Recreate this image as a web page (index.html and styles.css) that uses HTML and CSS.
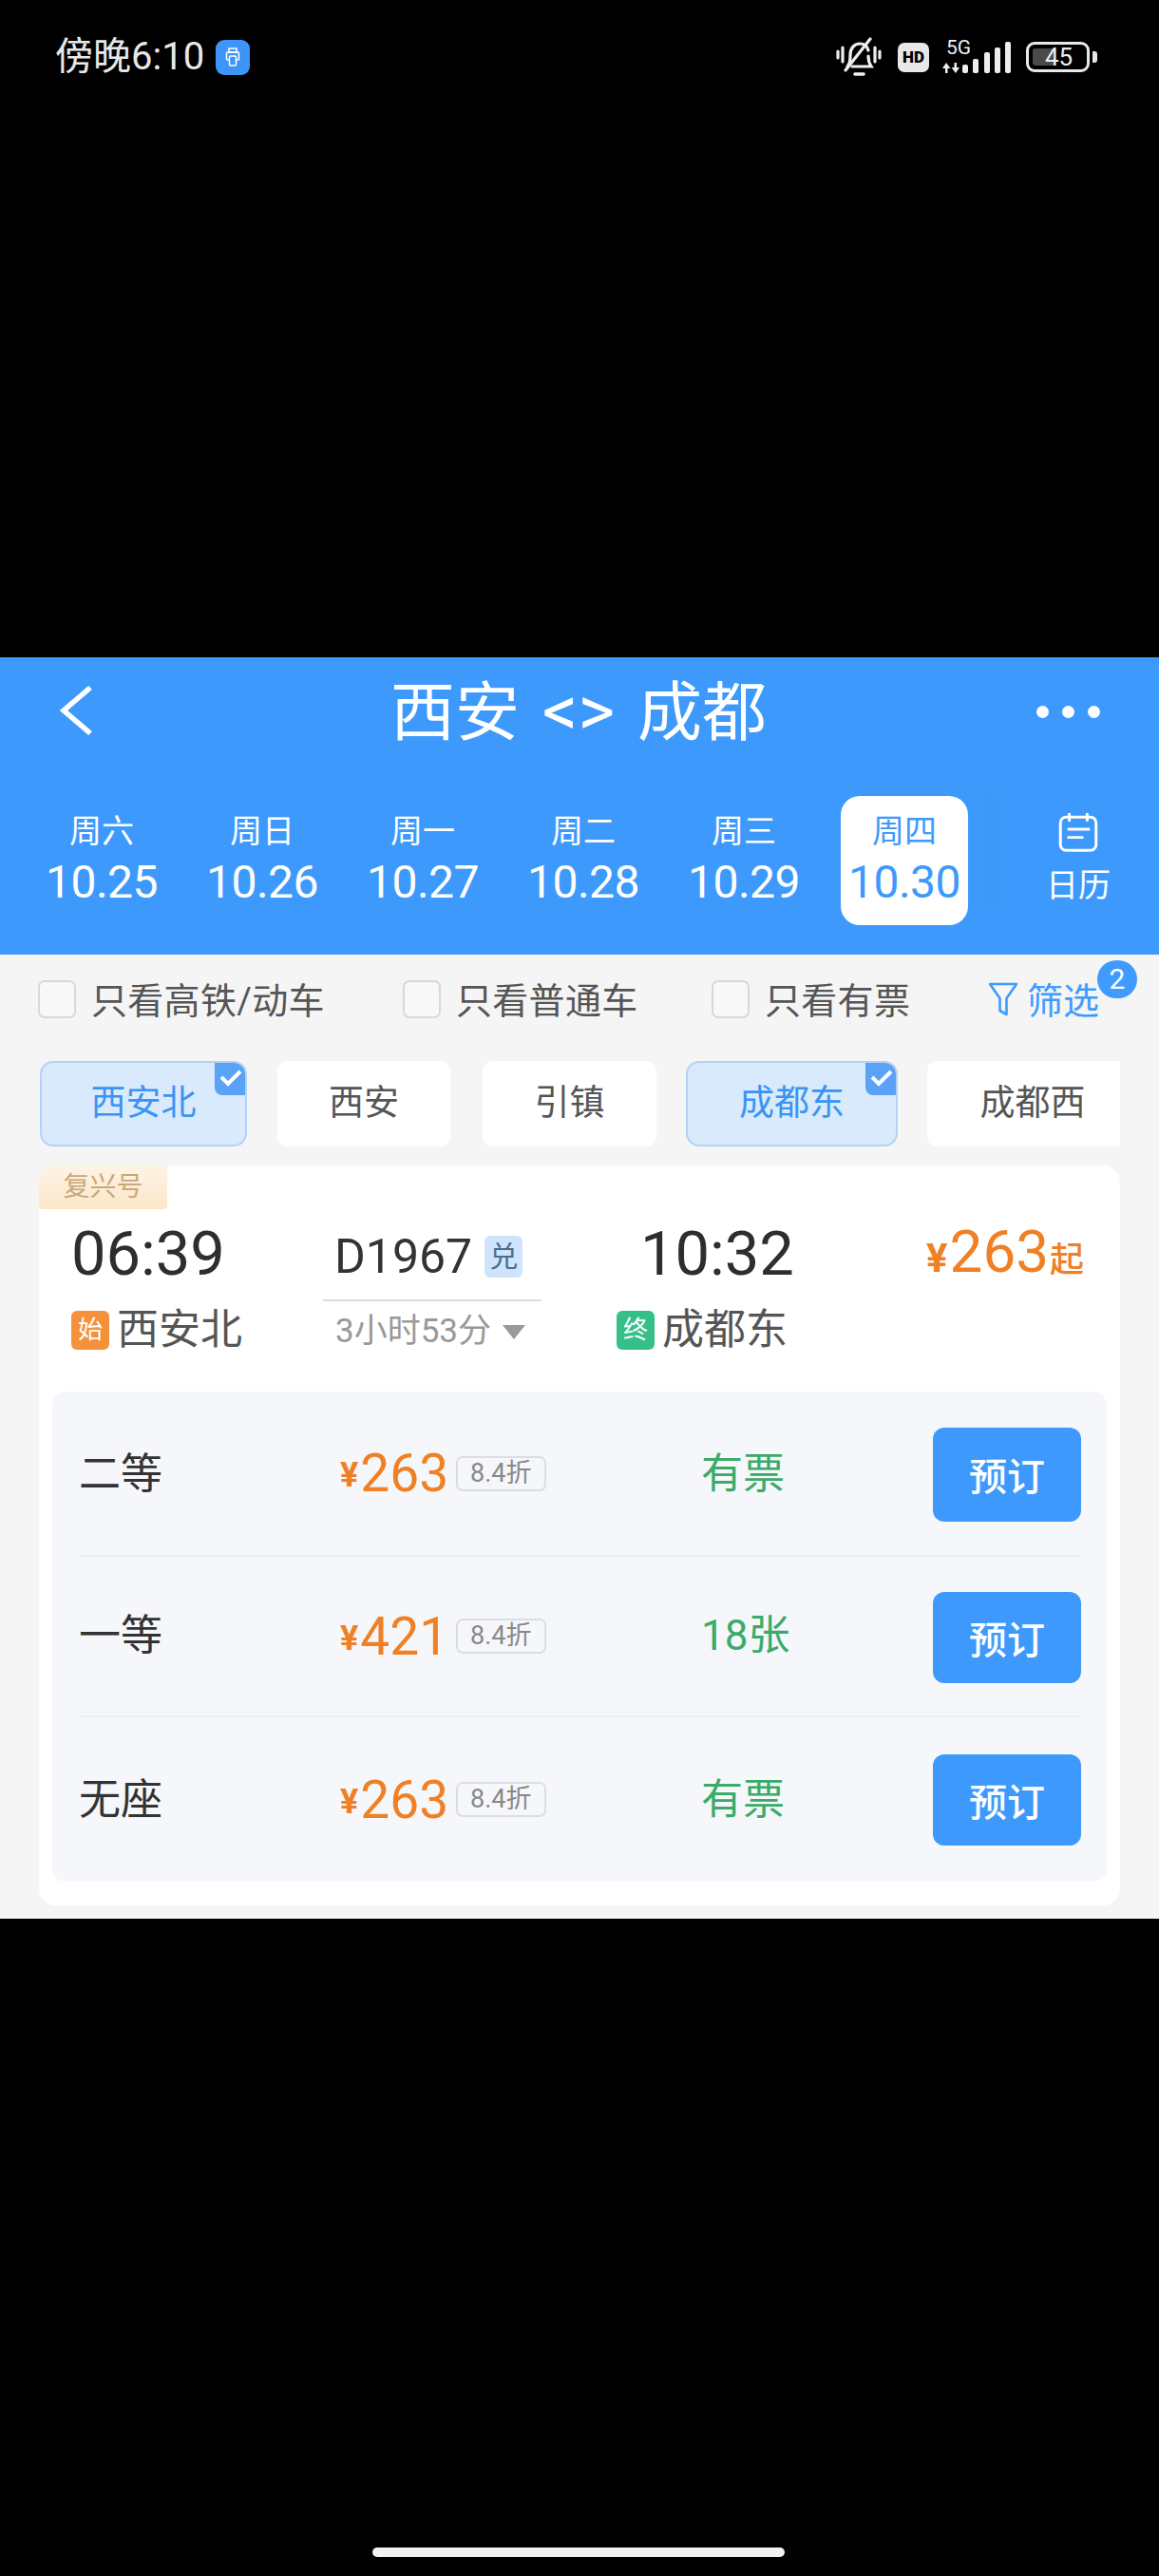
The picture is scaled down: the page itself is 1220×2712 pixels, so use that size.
FILE: index.html
```html
<!doctype html>
<html lang="zh-CN">
    <head>
        <meta charset="UTF-8" />
        <meta name="viewport" content="width=device-width, initial-scale=1.0" />
        <title>西安 - 成都</title>
        <link rel="stylesheet" href="styles.css">
    </head>
    <body>
        <div class="phone-top">
            <div class="statusbar">
                <div class="status-left">
                    <span class="clock">傍晚6:10</span>
                    <span class="app-dot">
                        <svg width="18" height="20" viewBox="0 0 18 20" fill="none" stroke="#fff" stroke-width="1.5">
                            <rect x="5" y="1" width="8" height="4" />
                            <rect x="2.500" y="5" width="13" height="8" rx="1" />
                            <rect x="5.500" y="9" width="7" height="10" rx="1" fill="#3d95f7" />
                        </svg>
                    </span>
                </div>
                <div class="status-right">
                    <svg class="ic-mute" width="48" height="42" viewBox="0 0 48 42" fill="none" stroke="#eee" stroke-width="3.200" stroke-linecap="round">
                        <path d="M2 15v7M7 11v15M46 15v7M41 11v15" />
                        <path d="M12 31c3-3 3-7 3-12 0-7 4-12 10-12 5 0 8 3 9 7M34 20c0 5 1 8 3 11H17" />
                        <path d="M36 2 10 35" />
                        <path d="M20 39h9" stroke-width="3.600" />
                    </svg>
                    <span class="hd">HD</span>
                    <div class="net">
                        <span class="net-5g">5G</span>
                        <svg width="74" height="36" viewBox="0 0 74 36" fill="#eee">
                            <path d="M4 24 0 30h3v5h2.500v-5h3zM14 35l4-6h-3v-5h-2.500v5h-3z" />
                            <rect x="21" y="26" width="6" height="9" rx="2" />
                            <rect x="32" y="20" width="6" height="15" rx="2" />
                            <rect x="44" y="13" width="6" height="22" rx="2" />
                            <rect x="55" y="8" width="6" height="27" rx="2" />
                            <rect x="66" y="2" width="6" height="33" rx="2" />
                        </svg>
                    </div>
                    <div class="battery">
                        <div class="battery-level"></div>
                        <span class="battery-num">45</span>
                    </div>
                    <div class="battery-tip"></div>
                </div>
            </div>
        </div>

        <div class="header">
            <div class="title-row">
                <svg class="back" width="36" height="52" viewBox="0 0 36 52" fill="none" stroke="#fff" stroke-width="5.500">
                    <path d="M33 2 5 26l28 24" />
                </svg>
                <div class="title">西安 <span class="arrows">&lt;&gt;</span> 成都</div>
                <div class="more"><i></i><i></i><i></i></div>
            </div>
            <div class="dates">
                <div class="date"><span class="wk">周六</span><span class="dn">10.25</span></div>
                <div class="date"><span class="wk">周日</span><span class="dn">10.26</span></div>
                <div class="date"><span class="wk">周一</span><span class="dn">10.27</span></div>
                <div class="date"><span class="wk">周二</span><span class="dn">10.28</span></div>
                <div class="date"><span class="wk">周三</span><span class="dn">10.29</span></div>
                <div class="date active"><span class="wk">周四</span><span class="dn">10.30</span></div>
                <div class="calendar">
                    <svg width="48" height="48" viewBox="0 0 48 48" fill="none" stroke="#fff" stroke-width="3.500" stroke-linecap="round">
                        <rect x="2" y="5" width="44" height="41" rx="7" />
                        <path d="M13 1v8M35 1v8M12 20h25M12 30h17" />
                    </svg>
                    <span>日历</span>
                </div>
            </div>
        </div>

        <div class="content">
            <div class="filters">
                <label class="check check-a"><i></i>只看高铁/动车</label>
                <label class="check check-b"><i></i>只看普通车</label>
                <label class="check check-c"><i></i>只看有票</label>
                <div class="filter-btn">
                    <svg width="32" height="36" viewBox="0 0 32 36" fill="none" stroke="#3f9bfd" stroke-width="2.600" stroke-linejoin="round">
                        <path d="M2 2h28L19.500 17v17l-7-4V17z" />
                    </svg>
                    <span>筛选</span>
                    <b class="badge">2</b>
                </div>
            </div>

            <div class="stations">
                <div class="chip chip-on w-a">西安北<span class="tick"><svg width="26" height="20" viewBox="0 0 26 20" fill="none" stroke="#fff" stroke-width="4"><path d="M3 9l7 7L23 3" /></svg></span></div>
                <div class="chip w-b">西安</div>
                <div class="chip w-c">引镇</div>
                <div class="chip chip-on w-d">成都东<span class="tick"><svg width="26" height="20" viewBox="0 0 26 20" fill="none" stroke="#fff" stroke-width="4"><path d="M3 9l7 7L23 3" /></svg></span></div>
                <div class="chip w-e">成都西</div>
            </div>

            <div class="card">
                <div class="train-tag">复兴号</div>
                <div class="train">
                    <div class="stop stop-from">
                        <div class="time">06:39</div>
                        <div class="place"><em class="mark mark-start">始</em>西安北</div>
                    </div>
                    <div class="mid">
                        <div class="code">D1967<em class="dui">兑</em></div>
                        <div class="line"></div>
                        <div class="dur">3小时53分<i class="tri"></i></div>
                    </div>
                    <div class="stop stop-to">
                        <div class="time">10:32</div>
                        <div class="place"><em class="mark mark-end">终</em>成都东</div>
                    </div>
                    <div class="from-price"><small>¥</small>263<span>起</span></div>
                </div>

                <div class="seats">
                    <div class="seat seat-1">
                        <div class="seat-name">二等</div>
                        <div class="seat-price"><small>¥</small>263<span class="off">8.4折</span></div>
                        <div class="seat-left">有票</div>
                        <button class="book">预订</button>
                    </div>
                    <div class="seat seat-2">
                        <div class="seat-name">一等</div>
                        <div class="seat-price"><small>¥</small>421<span class="off">8.4折</span></div>
                        <div class="seat-left">18张</div>
                        <button class="book">预订</button>
                    </div>
                    <div class="seat seat-3">
                        <div class="seat-name">无座</div>
                        <div class="seat-price"><small>¥</small>263<span class="off">8.4折</span></div>
                        <div class="seat-left">有票</div>
                        <button class="book">预订</button>
                    </div>
                </div>
            </div>
        </div>

        <div class="phone-bottom">
            <div class="home-bar"></div>
        </div>
    </body>
</html>
```

FILE: styles.css
```css
* {
    box-sizing: border-box;
}
body {
    margin: 0;
    width: 1220px;
    overflow-x: hidden;
    background-color: #000;
    font-family: Roboto, "Noto Sans CJK SC", sans-serif;
    color: #333;
}
i,
em {
    font-style: normal;
}

/* status bar */
.phone-top {
    height: 692px;
    padding: 39px 65px 0 58px;
}
.statusbar {
    display: flex;
    justify-content: space-between;
    align-items: center;
    height: 42px;
}
.status-left {
    display: flex;
    align-items: center;
    gap: 12px;
}
.clock {
    color: #e8e8e8;
    font-size: 40px;
    line-height: 42px;
}
.app-dot {
    display: flex;
    align-items: center;
    justify-content: center;
    width: 36px;
    height: 37px;
    border-radius: 9px;
    background-color: #3d95f7;
}
.status-right {
    display: flex;
    align-items: center;
}
.ic-mute {
    margin-right: 17px;
}
.hd {
    width: 33px;
    height: 31px;
    border-radius: 7px;
    background-color: #e8e8e8;
    color: #000;
    font-size: 17px;
    font-weight: 900;
    line-height: 31px;
    text-align: center;
    margin-right: 14px;
}
.net {
    position: relative;
    width: 74px;
    height: 36px;
    margin-right: 14px;
}
.net svg {
    display: block;
}
.net-5g {
    position: absolute;
    left: 4px;
    top: -2px;
    color: #eee;
    font-size: 21px;
    line-height: 20px;
}
.battery {
    position: relative;
    width: 67px;
    height: 32px;
    border: 3px solid #e8e8e8;
    border-radius: 9px;
    padding: 4px;
}
.battery-level {
    width: 24px;
    height: 100%;
    background-color: #4a4a4a;
    border-radius: 3px 0 0 3px;
}
.battery-num {
    position: absolute;
    left: 17px;
    top: -1px;
    color: #eee;
    font-size: 26px;
    line-height: 28px;
}
.battery-tip {
    width: 5px;
    height: 12px;
    margin-left: 3px;
    border-radius: 0 3px 3px 0;
    background-color: #e8e8e8;
}

/* blue header */
.header {
    height: 313px;
    overflow: hidden;
    background-color: #3d9afc;
    color: #fff;
}
.title-row {
    display: flex;
    align-items: center;
    height: 116px;
    padding: 0 62px;
}
.back {
    margin-top: -4px;
}
.title {
    flex: 1;
    margin-left: 29px;
    font-size: 68px;
    line-height: 116px;
    word-spacing: 7px;
    text-align: center;
    white-space: pre;
}
.arrows {
    font-size: 74px;
}
.more {
    display: flex;
    gap: 14px;
    margin-top: -2px;
}
.more i {
    width: 13px;
    height: 13px;
    border-radius: 50%;
    background-color: #fff;
}
.dates {
    display: flex;
    margin-top: 30px;
    padding-left: 23px;
}
.date {
    display: flex;
    flex: none;
    flex-direction: column;
    align-items: center;
    width: 134px;
    height: 136px;
    margin-left: 17px;
    margin-right: 18px;
    padding-top: 14px;
    border-radius: 20px;
}
.date .wk {
    font-size: 34px;
    line-height: 46px;
}
.date .dn {
    font-size: 48px;
    line-height: 60px;
    letter-spacing: -0.5px;
    margin-top: 1px;
}
.date.active {
    background-color: #fff;
    color: #3d9afc;
    margin-right: 0;
}
.calendar {
    display: flex;
    flex: none;
    flex-direction: column;
    align-items: center;
    width: 216px;
    height: 116px;
    margin-left: 8px;
    padding-top: 18px;
    background: linear-gradient(to right, rgba(40, 110, 200, 0), rgba(40, 110, 200, 0.07) 16px, rgba(40, 110, 200, 0) 32px);
    font-size: 34px;
    line-height: 44px;
}
.calendar svg {
    margin-bottom: 13px;
}

/* filter line */
.content {
    height: 1015px;
    background-color: #f5f5f5;
}
.filters {
    display: flex;
    align-items: center;
    height: 90px;
    margin-bottom: 22px;
    color: #555;
    font-size: 38px;
}
.check {
    display: flex;
    align-items: center;
    white-space: nowrap;
    letter-spacing: 0.3px;
}
.check i {
    width: 40px;
    height: 40px;
    margin-top: 4px;
    margin-right: 16px;
    border: 2px solid #d8d8d8;
    border-radius: 7px;
    background-color: #f8f8f8;
}
.check-a {
    margin-left: 40px;
    width: 384px;
}
.check-b {
    width: 325px;
}
.check-c {
    width: 291px;
}
.filter-btn {
    position: relative;
    display: flex;
    align-items: center;
    gap: 9px;
    color: #3f9bfd;
}
.filter-btn svg {
    margin-top: 4px;
}
.badge {
    position: absolute;
    left: 115px;
    top: -12px;
    width: 42px;
    height: 40px;
    border-radius: 20px;
    background-color: #3f9bfd;
    color: #fff;
    font-size: 30px;
    font-weight: 400;
    line-height: 40px;
    text-align: center;
}

/* station chips */
.stations {
    display: flex;
    width: 1179px;
    height: 90px;
    overflow: hidden;
    padding-left: 42px;
}
.chip {
    position: relative;
    flex: none;
    height: 90px;
    border-radius: 10px;
    background-color: #fff;
    color: #555;
    font-size: 37px;
    line-height: 90px;
    text-align: center;
}
.chip-on {
    border: 2px solid #b3d2f7;
    border-radius: 14px;
    background-color: #d9eafd;
    color: #3a94f2;
    line-height: 86px;
    overflow: hidden;
}
.tick {
    position: absolute;
    top: -2px;
    right: -2px;
    display: flex;
    align-items: center;
    justify-content: center;
    width: 34px;
    height: 36px;
    border-radius: 0 0 0 8px;
    background-color: #5aa2f5;
}
.w-a {
    width: 218px;
    margin-right: 32px;
}
.w-b {
    width: 182px;
    margin-right: 34px;
}
.w-c {
    width: 183px;
    margin-right: 31px;
}
.w-d {
    width: 223px;
    margin-right: 31px;
}
.w-e {
    width: 230px;
    padding-right: 8px;
}

/* train card */
.card {
    position: relative;
    width: 1138px;
    height: 779px;
    margin: 20px 0 0 41px;
    padding: 0 14px;
    border-radius: 18px;
    background-color: #fff;
}
.train-tag {
    position: absolute;
    left: 0;
    top: 0;
    width: 135px;
    height: 46px;
    border-radius: 16px 0 4px 4px;
    background: linear-gradient(#fdf4e6, #fde6c8);
    color: #c9a877;
    font-size: 28px;
    line-height: 46px;
    text-align: center;
}
.train {
    display: flex;
    height: 238px;
}
.stop {
    padding-top: 54px;
}
.stop-from {
    width: 285px;
    padding-left: 20px;
}
.stop-to {
    width: 326px;
}
.time {
    font-size: 65px;
    line-height: 78px;
    color: #2e2e2e;
}
.stop-to .time {
    padding-left: 25px;
}
.place {
    display: flex;
    align-items: center;
    margin-top: 16px;
    color: #555;
    font-size: 44px;
    line-height: 50px;
}
.mark {
    width: 40px;
    height: 41px;
    margin-right: 8px;
    border-radius: 6px;
    color: #fff;
    font-size: 26px;
    line-height: 40px;
    text-align: center;
}
.mark-start {
    background-color: #f5913a;
}
.mark-end {
    background-color: #35c08a;
}
.mid {
    width: 309px;
    padding: 74px 0 0 0;
}
.code {
    display: flex;
    align-items: center;
    height: 44px;
    padding-left: 12px;
    font-size: 50px;
}
.dui {
    width: 40px;
    height: 44px;
    margin-left: 13px;
    border-radius: 6px;
    background-color: #cfe4fb;
    color: #4b6d93;
    font-size: 30px;
    line-height: 44px;
    text-align: center;
}
.line {
    width: 230px;
    height: 2px;
    margin-top: 23px;
    background-color: #ddd;
}
.dur {
    display: flex;
    align-items: center;
    margin-top: 12px;
    padding-left: 13px;
    color: #999;
    font-size: 35px;
    line-height: 40px;
}
.tri {
    width: 0;
    height: 0;
    margin-left: 12px;
    border-left: 12px solid transparent;
    border-right: 12px solid transparent;
    border-top: 15px solid #999;
}
.from-price {
    padding-top: 56px;
    color: #f08025;
    font-size: 62px;
    line-height: 70px;
    white-space: nowrap;
}
.from-price small {
    font-size: 42px;
    font-weight: 700;
    margin-right: 2px;
}
.from-price span {
    font-size: 36px;
    font-weight: 500;
    margin-left: 1px;
}

/* seat table */
.seats {
    padding: 0 27px 0 28px;
    border-radius: 14px;
    background-color: #f6f7fb;
}
.seat {
    display: flex;
    align-items: center;
    font-size: 44px;
}
.seat-1 {
    height: 174px;
    border-bottom: 2px solid #eeeff3;
}
.seat-2 {
    height: 169px;
    border-bottom: 2px solid #eeeff3;
}
.seat-3 {
    height: 173px;
}
.seat-name {
    width: 275px;
    color: #333;
    margin-top: -6px;
}
.seat-2 .seat-name {
    margin-top: -10px;
}
.seat-3 .seat-name {
    margin-top: -8px;
}
.seat-price {
    display: flex;
    align-items: center;
    width: 380px;
    color: #f08025;
    font-size: 55px;
}
.seat-price small {
    font-size: 36px;
    font-weight: 700;
    margin-top: 4px;
    margin-right: 2px;
}
.off {
    height: 37px;
    margin-left: 8px;
    padding: 0 13px;
    border: 2px solid #dcdde2;
    border-radius: 7px;
    color: #888;
    font-size: 27px;
    line-height: 32px;
}
.seat-left {
    width: 244px;
    color: #3bab69;
    margin-top: -6px;
}
.seat-2 .seat-left {
    margin-top: -10px;
}
.seat-3 .seat-left {
    margin-top: -8px;
}
.book {
    width: 156px;
    height: 96px;
    border: none;
    border-radius: 12px;
    background-color: #3d9afc;
    color: #fff;
    font-family: inherit;
    font-size: 40px;
    font-weight: 500;
}
.seat-1 .book {
    height: 99px;
    margin-top: 2px;
}
.seat-2 .book {
    margin-top: 2px;
}

/* gesture bar */
.phone-bottom {
    height: 692px;
    padding-top: 662px;
}
.home-bar {
    width: 434px;
    height: 10px;
    margin-left: 392px;
    border-radius: 5px;
    background-color: #f2f2f2;
}
```
